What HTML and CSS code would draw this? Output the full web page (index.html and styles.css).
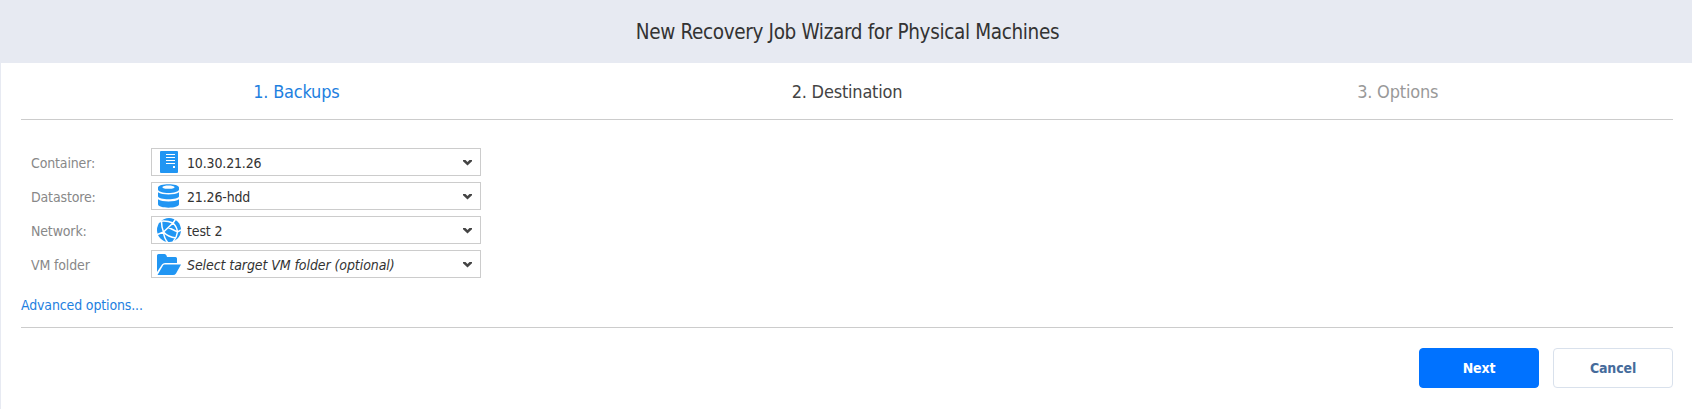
FILE: index.html
```html
<!DOCTYPE html>
<html lang="en">
<head>
<meta charset="utf-8">
<title>New Recovery Job Wizard for Physical Machines</title>
<link rel="stylesheet" href="styles.css">
</head>
<body>
<header class="header"><h1 class="title">New Recovery Job Wizard for Physical Machines</h1></header>
<main class="content">
  <nav class="steps">
    <a class="step done"><span>1. Backups</span></a>
    <a class="step current"><span>2. Destination</span></a>
    <a class="step"><span>3. Options</span></a>
  </nav>
  <form class="form">
    <div class="row"><label class="label">Container:</label>
      <div class="select"><svg class="icon" width="26" height="26" viewBox="0 0 26 26"><rect x="4" y="2" width="18" height="22" rx="1" fill="#2196f3"/><path d="M10 5.500h9M10 8.500h9M10 11.500h9M10 14.500h9" stroke="#fff"/><rect x="17" y="17" width="2" height="2" fill="#fff"/></svg><span class="value">10.30.21.26</span><svg class="arrow" width="9" height="6" viewBox="0 0 9 6"><path d="M0 0h2.500l2 2 2-2H9v1.200L4.500 5.400 0 1.200z" fill="#444"/></svg></div></div>
    <div class="row"><label class="label">Datastore:</label>
      <div class="select"><svg class="icon" width="26" height="26" viewBox="0 0 26 26"><path fill="#2196f3" fill-rule="evenodd" d="M2 4.500C2 0 23 0 23 4.500v2c0 4.600-21 4.600-21 0zM6.500 4.200c0 2.200 12 2.200 12 0s-12-2.200-12 0z"/><path fill="#2196f3" d="M2 9.300c4 3 17 3 21 0v4c0 4-21 4-21 0zM2 16.300c4 3 17 3 21 0v5c0 4.500-21 4.500-21 0z"/></svg><span class="value">21.26-hdd</span><svg class="arrow" width="9" height="6" viewBox="0 0 9 6"><path d="M0 0h2.500l2 2 2-2H9v1.200L4.500 5.400 0 1.200z" fill="#444"/></svg></div></div>
    <div class="row"><label class="label">Network:</label>
      <div class="select"><svg class="icon" width="26" height="26" viewBox="0 0 26 26"><circle cx="13" cy="13" r="12" fill="#2196f3"/><g fill="none" stroke="#fff" stroke-width="1.500"><path d="M3 4.500Q10 3 17 6M17 6L20 1.500M17 6Q21 10 21.500 15M17 6L7.500 15M5.500 4.500Q5.500 10 7.500 15M7.500 15L0 18M12.500 10.500L21.500 15L25 13M7.500 15Q8 21 12 26M7.500 15Q12 20 20 21M21.500 15Q21 20 17 25"/></g></svg><span class="value">test 2</span><svg class="arrow" width="9" height="6" viewBox="0 0 9 6"><path d="M0 0h2.500l2 2 2-2H9v1.200L4.500 5.400 0 1.200z" fill="#444"/></svg></div></div>
    <div class="row"><label class="label">VM folder</label>
      <div class="select"><svg class="icon" width="26" height="26" viewBox="0 0 26 26"><path fill="#2196f3" d="M1 21V4.500Q1 3 2.500 3h6Q10 3 10.500 4.500L11 6h8.500Q21 6 21 7.500V12H9Q7 12 6 13.500z"/><path fill="#2196f3" d="M8.500 13.500H25L20 22.500Q19 24 17 24H1.500L7 14.500Q7.500 13.500 8.500 13.500z"/></svg><span class="value placeholder">Select target VM folder (optional)</span><svg class="arrow" width="9" height="6" viewBox="0 0 9 6"><path d="M0 0h2.500l2 2 2-2H9v1.200L4.500 5.400 0 1.200z" fill="#444"/></svg></div></div>
    <a class="advanced">Advanced options...</a>
  </form>
  <footer class="footer"><button class="button primary">Next</button><button class="button">Cancel</button></footer>
</main>
</body>
</html>
```

FILE: styles.css
```css
* { box-sizing: border-box; }
body { margin: 0; height: 409px; font: 14px/20px "DejaVu Sans Condensed", "DejaVu Sans", sans-serif; font-stretch: condensed; background: #fff; color: #333; overflow: hidden; }
.header { height: 63px; background: #e7eaf2; display: flex; align-items: center; justify-content: center; padding-left: 3px; }
.title { margin: 0; font-size: 20.5px; font-weight: 400; line-height: 24px; letter-spacing: -0.35px; white-space: nowrap; }
.content { height: 346px; border-left: 1px solid #e7eaf2; padding: 0 19px 0 20px; }
.steps { height: 57px; display: grid; grid-template-columns: repeat(3, 1fr); border-bottom: 1px solid #ccc; }
.step { display: flex; justify-content: center; padding-top: 18px; font-size: 18px; line-height: 22px; letter-spacing: -0.2px; color: #999; }
.done { color: #1e80e0; }
.current { color: #444; }
.form { height: 208px; padding-top: 28px; border-bottom: 1px solid #ccc; }
.row { display: flex; height: 28px; margin-bottom: 6px; padding-left: 10px; align-items: center; }
.label { width: 120px; color: #888; letter-spacing: -0.15px; padding-top: 2px; }
.select { width: 330px; height: 28px; border: 1px solid #ccc; display: flex; align-items: center; padding: 0 8px 0 4px; }
.icon { display: block; flex: none; }
.arrow { display: block; flex: none; margin-top: 1px; }
.value { flex: 1; padding: 2px 0 0 5px; letter-spacing: -0.15px; white-space: nowrap; }
.placeholder { font-style: italic; letter-spacing: -0.08px; }
.advanced { display: block; margin-top: 17px; line-height: 20px; color: #1e80e0; letter-spacing: -0.15px; }
.footer { display: flex; justify-content: flex-end; gap: 14px; padding-top: 20px; }
.button { width: 120px; height: 40px; border: 1px solid #d9e1ec; border-radius: 4px; background: #fff; color: #456b9b; font: bold 14px "DejaVu Sans Condensed", sans-serif; letter-spacing: -0.15px; padding: 0; }
.primary { background: #0072ff; border-color: #0072ff; color: #fff; }
```
